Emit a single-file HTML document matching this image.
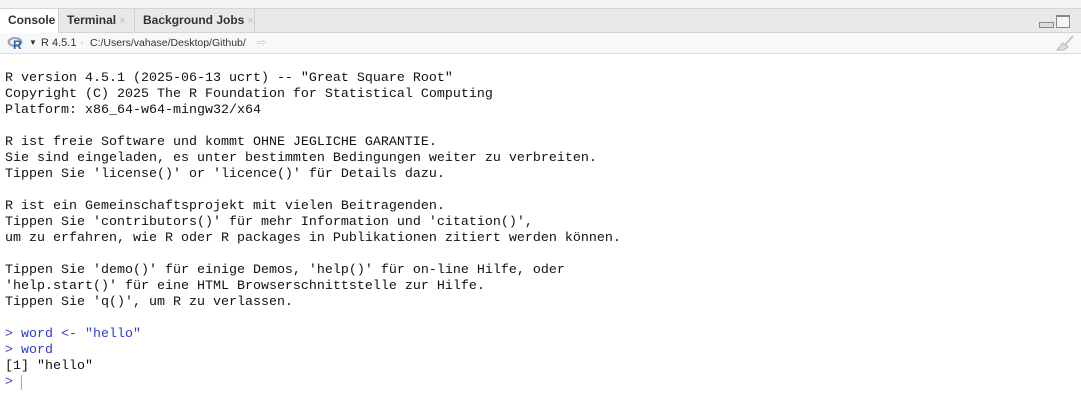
<!DOCTYPE html>
<html><head><style>
body{margin:0;width:1081px;height:400px;background:#fff;overflow:hidden;font-family:"Liberation Sans",sans-serif;position:relative}
.top{position:absolute;left:0;top:0;width:1081px;height:8px;background:#f4f4f4;border-bottom:1px solid #d6d6d6}
.tabs{position:absolute;left:0;top:9px;width:1081px;height:23px;background:#e9e9e9;border-bottom:1px solid #d4d4d4}
.tab{position:absolute;top:0;height:23px;font-size:12px;font-weight:bold;color:#333;line-height:23px;border-right:1px solid #d0d0d0;box-sizing:border-box;padding-left:8px}
.tab .x{color:#bbb;font-weight:normal;font-size:11px;margin-left:3px}
.tb{position:absolute;left:0;top:33px;width:1081px;height:20px;background:#f6f8f9;border-bottom:1px solid #dcdcdc;font-size:11px;color:#333;line-height:20px}
pre{position:absolute;left:5px;top:71px;margin:0;font-family:"Liberation Mono",monospace;font-size:13.33px;line-height:16px;color:#111}
.b{color:#2f3bd0}
</style></head><body>
<div class="top"></div>
<div class="tabs">
<div class="tab" style="left:0;width:59px;background:#fff;height:24px">Console</div>
<div class="tab" style="left:59px;width:76px">Terminal<span class="x">×</span></div>
<div class="tab" style="left:135px;width:120px">Background Jobs<span class="x">×</span></div>
<div style="position:absolute;left:1039px;top:13px;width:13px;height:4px;border:1px solid #888;background:#ddd"></div>
<div style="position:absolute;left:1056px;top:6px;width:12px;height:10px;border:1px solid #888;border-top-width:2px;background:#f4f4f4"></div>
</div>
<div class="tb">
<svg style="position:absolute;left:7px;top:3px" width="18" height="14"><ellipse cx="8" cy="6" rx="7.5" ry="5" fill="#a0a4ad"/><ellipse cx="8" cy="6" rx="5" ry="3" fill="#f6f8f9"/><text x="6" y="13" font-family="Liberation Sans" font-weight="bold" font-size="12" fill="#1f65b7">R</text></svg>
<span style="position:absolute;left:29px;font-size:8px">▼</span>
<span style="position:absolute;left:41px">R 4.5.1</span>
<span style="position:absolute;left:80px;color:#888">·</span>
<span style="position:absolute;left:90px;font-size:10.5px">C:/Users/vahase/Desktop/Github/</span>
<span style="position:absolute;left:257px;color:#ccc;font-size:11px">⇨</span>
<svg style="position:absolute;left:1055px;top:2px" width="20" height="17"><path d="M18 1 L10 10" stroke="#bbb" stroke-width="1.5"/><path d="M2 15 L8 8 L13 12 L9 15 Z" fill="#ddd" stroke="#bbb"/></svg>
</div>
<pre>R version 4.5.1 (2025-06-13 ucrt) -- "Great Square Root"
Copyright (C) 2025 The R Foundation for Statistical Computing
Platform: x86_64-w64-mingw32/x64

R ist freie Software und kommt OHNE JEGLICHE GARANTIE.
Sie sind eingeladen, es unter bestimmten Bedingungen weiter zu verbreiten.
Tippen Sie 'license()' or 'licence()' für Details dazu.

R ist ein Gemeinschaftsprojekt mit vielen Beitragenden.
Tippen Sie 'contributors()' für mehr Information und 'citation()',
um zu erfahren, wie R oder R packages in Publikationen zitiert werden können.

Tippen Sie 'demo()' für einige Demos, 'help()' für on-line Hilfe, oder
'help.start()' für eine HTML Browserschnittstelle zur Hilfe.
Tippen Sie 'q()', um R zu verlassen.

<span class="b">&gt; word &lt;- "hello"</span>
<span class="b">&gt; word</span>
[1] "hello"
<span class="b">&gt; </span><span style="border-left:1px solid #aaa"></span></pre>
</body></html>
